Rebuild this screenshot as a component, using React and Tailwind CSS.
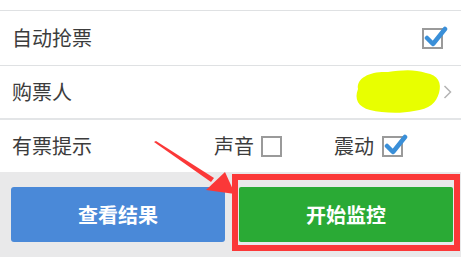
import React from 'react';

const font = { fontFamily: '"Noto Sans CJK SC", "Noto Sans", sans-serif' };

const CheckBox = ({ checked }) => (
  <div className="relative w-[21px] h-[21px] border-2 border-[#9a9a9a] bg-white">
    {checked && (
      <svg className="absolute -left-[2px] -top-[6px]" width="26" height="26" viewBox="0 0 26 26">
        <path d="M5 14 L11 20 L23 5" fill="none" stroke="#3a8fd8" strokeWidth="4.5" strokeLinecap="round" strokeLinejoin="round" />
      </svg>
    )}
  </div>
);

const App = () => {
  return (
    <div className="relative w-[461px] h-[257px] overflow-hidden bg-[#e9e9ea] text-[#3c3c3c]" style={font}>
      <div className="bg-white">
        <div className="h-[11px] border-b border-[#dfe1e3]"></div>
        <div className="h-[55px] flex items-center justify-between pl-3 pr-[18px] border-b border-[#dfe1e3]">
          <span className="text-[20px]">自动抢票</span>
          <CheckBox checked />
        </div>
        <div className="h-[54px] flex items-center justify-between pl-3 pr-[9px] border-b-2 border-[#e3e5e7]">
          <span className="text-[20px]">购票人</span>
          <div className="flex items-center">
            <svg width="90" height="46" viewBox="0 0 90 46">
              <path d="M6 20 C4 8 20 2 36 3 C50 1 62 0 74 4 C86 6 90 14 87 24 C84 34 78 40 62 42 C48 45 30 44 18 41 C6 38 2 30 6 20 Z" fill="#e8ff00" />
            </svg>
            <svg className="ml-[1px]" width="9" height="14" viewBox="0 0 9 14">
              <path d="M1.5 1 L7.5 7 L1.5 13" fill="none" stroke="#b4b4b4" strokeWidth="1.5" />
            </svg>
          </div>
        </div>
        <div className="h-[52px] flex items-center pl-3">
          <span className="text-[20px] w-[202px]">有票提示</span>
          <span className="text-[20px]">声音</span>
          <div className="ml-[7px]"><CheckBox /></div>
          <span className="text-[20px] ml-[52px]">震动</span>
          <div className="ml-[8px]"><CheckBox checked /></div>
        </div>
      </div>
      <div className="flex gap-[14px] pl-[11px] pr-[8px] pt-[15px]">
        <button className="w-[214px] h-[55px] rounded-[3px] bg-[#4a89d8] text-white text-[20px] font-bold">查看结果</button>
        <button className="w-[214px] h-[55px] rounded-[2px] bg-[#2aaa35] text-white text-[20px] font-bold">开始监控</button>
      </div>
      <div className="absolute left-[232px] top-[174px] w-[228px] h-[77px] border-[6px] border-[#fb3838]"></div>
      <svg className="absolute left-0 top-0" width="461" height="257" viewBox="0 0 461 257">
        <polygon points="154,142 156,141 214,178 211,182" fill="#fb3838" />
        <polygon points="206,190 225,172 235,194" fill="#fb3838" />
      </svg>
    </div>
  );
};

export default App;
